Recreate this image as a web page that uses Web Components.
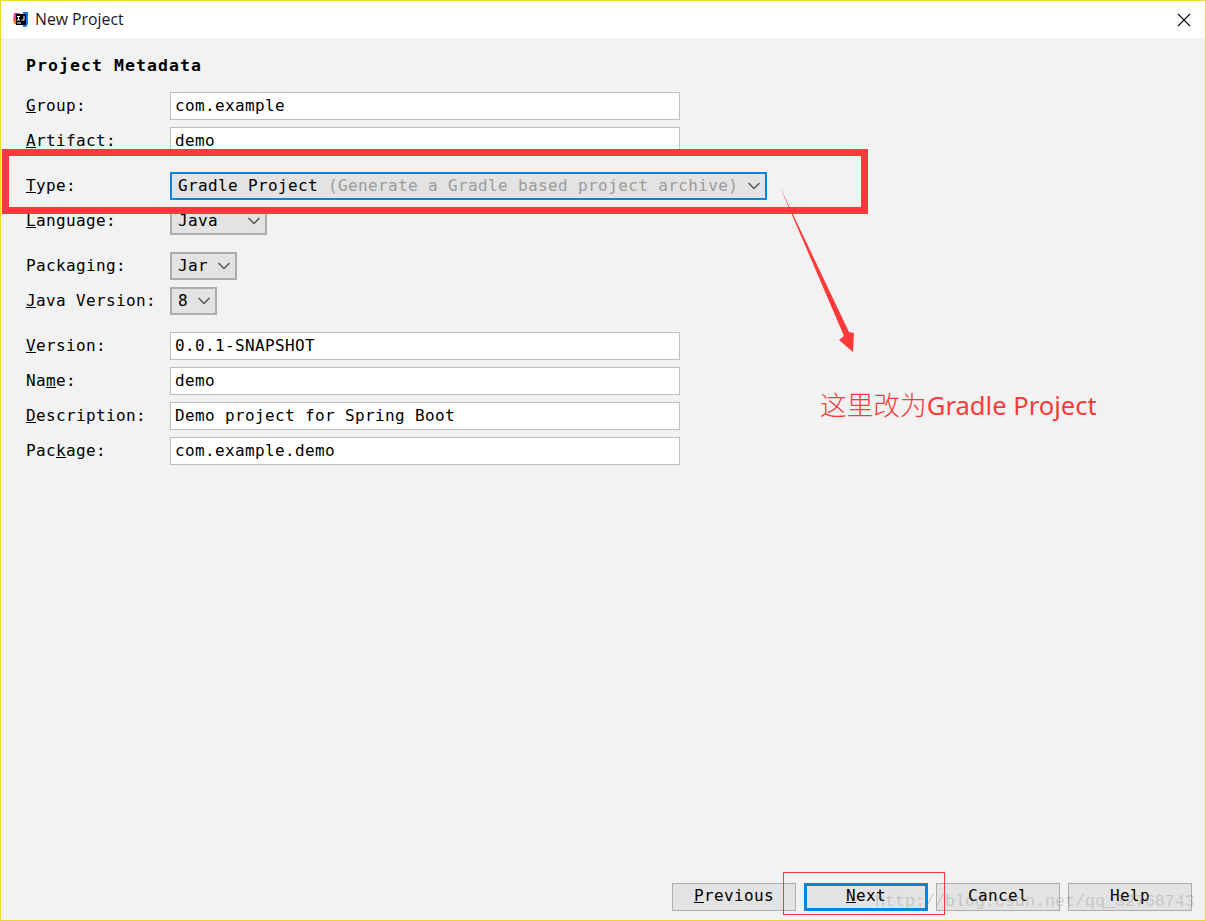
<!DOCTYPE html>
<html>
<head>
<meta charset="utf-8">
<title>New Project</title>
<style>
  html, body { margin: 0; padding: 0; background: #f2f2f2; }
</style>
</head>
<body>
<np-window>
  <np-titlebar slot="title">New Project</np-titlebar>

  <np-section>Project Metadata</np-section>

  <np-group>
    <np-field><u>G</u>roup:<np-input slot="control">com.example</np-input></np-field>
    <np-field><u>A</u>rtifact:<np-input slot="control">demo</np-input></np-field>
  </np-group>
  <np-group>
    <np-field><u>T</u>ype:<np-select slot="control" focused style="--label-width:560px">Gradle Project <span style="color:#9b9b9b">(Generate a Gradle based project archive)</span></np-select></np-field>
    <np-field><u>L</u>anguage:<np-select slot="control" style="--label-width:60px">Java</np-select></np-field>
  </np-group>
  <np-group>
    <np-field>Packa<u>g</u>ing:<np-select slot="control" style="--label-width:30px">Jar</np-select></np-field>
    <np-field><u>J</u>ava Version:<np-select slot="control" style="--label-width:10px">8</np-select></np-field>
  </np-group>
  <np-group>
    <np-field><u>V</u>ersion:<np-input slot="control">0.0.1-SNAPSHOT</np-input></np-field>
    <np-field>Na<u>m</u>e:<np-input slot="control">demo</np-input></np-field>
    <np-field><u>D</u>escription:<np-input slot="control">Demo project for Spring Boot</np-input></np-field>
    <np-field>Pac<u>k</u>age:<np-input slot="control">com.example.demo</np-input></np-field>
  </np-group>

  <np-button slot="footer"><u>P</u>revious</np-button>
  <np-button slot="footer" primary><u>N</u>ext</np-button>
  <np-button slot="footer">Cancel</np-button>
  <np-button slot="footer">Help</np-button>

  <np-annotations slot="overlay"></np-annotations>
</np-window>

<script>
const MONO = `"DejaVu Sans Mono", "Liberation Mono", monospace`;

class NpWindow extends HTMLElement {
  constructor() {
    super();
    this.attachShadow({ mode: 'open' }).innerHTML = `
      <style>
        :host {
          display: flex;
          flex-direction: column;
          position: relative;
          box-sizing: border-box;
          width: 1206px;
          height: 921px;
          overflow: hidden;
          border: 1px solid #ecd62e;
          background: #f2f2f2;
          color: #000;
          font-family: ${MONO};
          font-size: 16px;
          letter-spacing: 0.37px;
        }
        main { flex: 1; display: flex; flex-direction: column; padding: 15px 0 0 25px; }
        footer { display: flex; justify-content: flex-end; gap: 8px; padding: 0 13px 9px 0; }
      </style>
      <slot name="title"></slot>
      <main><slot></slot></main>
      <footer><slot name="footer"></slot></footer>
      <slot name="overlay"></slot>
    `;
  }
}

class NpTitlebar extends HTMLElement {
  constructor() {
    super();
    this.attachShadow({ mode: 'open' }).innerHTML = `
      <style>
        :host {
          display: flex;
          align-items: center;
          height: 37px;
          padding-left: 11px;
          background: #fff;
          font-family: "Open Sans", "Noto Sans", sans-serif;
          font-size: 15.800px;
          letter-spacing: 0;
          color: #1a1a1a;
        }
        .logo { width: 17px; height: 17px; margin-right: 6px; margin-top: -1px; }
        .title { flex: 1; padding-bottom: 1px; }
        .close { width: 14px; height: 14px; margin-right: 14px; }
      </style>
      <svg class="logo" viewBox="0 0 17 17">
        <path d="M2 2h6v8H1z" fill="#fc318c"/>
        <path d="M1 8h3v5H2z" fill="#f97a12"/>
        <path d="M11 1h5v12l-2 3h-3z" fill="#087cfa"/>
        <rect x="4" y="3" width="10" height="11" fill="#000"/>
        <rect x="5" y="5" width="3" height="1" fill="#fff"/>
        <rect x="6" y="5" width="1" height="4" fill="#fff"/>
        <rect x="5" y="8.500" width="3" height="1" fill="#fff"/>
        <path d="M11.500 5v3.500h-2v1h3v-4.500z" fill="#fff"/>
        <rect x="5" y="11.500" width="4" height="1" fill="#fff"/>
      </svg>
      <span class="title"><slot></slot></span>
      <svg class="close" viewBox="0 0 14 14"><path d="M1 1l12 12M13 1L1 13" stroke="#111" stroke-width="1.100" fill="none"/></svg>
    `;
  }
}

class NpSection extends HTMLElement {
  constructor() {
    super();
    this.attachShadow({ mode: 'open' }).innerHTML = `
      <style>
        :host {
          display: block;
          height: 39px;
          padding-top: 1px;
          margin-bottom: -1px;
          font-weight: 700;
          font-size: 16.500px;
          line-height: 24px;
          letter-spacing: 1.060px;
        }
      </style>
      <slot></slot>
    `;
  }
}

class NpGroup extends HTMLElement {
  constructor() {
    super();
    this.attachShadow({ mode: 'open' }).innerHTML = `
      <style>
        :host { display: flex; flex-direction: column; gap: 7px; margin-bottom: 17px; }
      </style>
      <slot></slot>
    `;
  }
}

class NpField extends HTMLElement {
  constructor() {
    super();
    this.attachShadow({ mode: 'open' }).innerHTML = `
      <style>
        :host { display: grid; grid-template-columns: 144px 1fr; align-items: center; height: 28px; }
        ::slotted(*) { justify-self: start; }
        .label { padding-bottom: 2px; }
      </style>
      <span class="label"><slot></slot></span>
      <slot name="control"></slot>
    `;
  }
}

class NpInput extends HTMLElement {
  constructor() {
    super();
    this.attachShadow({ mode: 'open' }).innerHTML = `
      <style>
        :host {
          display: flex;
          align-items: center;
          box-sizing: border-box;
          width: 510px;
          height: 28px;
          padding-left: 4px;
          background: #fff;
          border: 1px solid #bfbfbf;
          white-space: pre;
        }
        .value { display: block; padding-bottom: 1px; }
      </style>
      <span class="value"><slot></slot></span>
    `;
  }
}

class NpSelect extends HTMLElement {
  constructor() {
    super();
    this.attachShadow({ mode: 'open' }).innerHTML = `
      <style>
        :host {
          display: inline-flex;
          align-items: center;
          box-sizing: border-box;
          height: 28px;
          padding: 0 4px 0 6px;
          gap: 9px;
          background: #e3e3e3;
          border: 2px solid #adadad;
          white-space: pre;
        }
        :host([focused]) { border-color: #0a84da; }
        .label { width: var(--label-width, auto); padding-bottom: 2px; }
        svg { width: 14px; height: 8px; flex: none; }
      </style>
      <span class="label"><slot></slot></span>
      <svg viewBox="0 0 14 8"><path d="M1.500 1l5.500 5.500L12.500 1" stroke="#555" stroke-width="1.500" fill="none"/></svg>
    `;
  }
}

class NpButton extends HTMLElement {
  constructor() {
    super();
    this.attachShadow({ mode: 'open' }).innerHTML = `
      <style>
        :host {
          display: flex;
          align-items: center;
          justify-content: center;
          box-sizing: border-box;
          width: 124px;
          height: 28px;
          padding-bottom: 4px;
          background: #e3e3e3;
          border: 1px solid #adadad;
        }
        :host([primary]) { border: 3px solid #0a84da; }
      </style>
      <slot></slot>
    `;
  }
}

// red markup drawn on top of the screenshot, placed on the free canvas
class NpAnnotations extends HTMLElement {
  constructor() {
    super();
    this.attachShadow({ mode: 'open' }).innerHTML = `
      <style>
        :host { position: absolute; inset: -1px; pointer-events: none; display: block; }
        .box { position: absolute; box-sizing: border-box; border: 7px solid #fc3a3a; left: 2px; top: 149px; width: 866px; height: 65px; }
        .thin { position: absolute; box-sizing: border-box; border: 1px solid #f63c3c; left: 783px; top: 872px; width: 162px; height: 43px; }
        svg { position: absolute; left: 0; top: 0; width: 1206px; height: 921px; }
        .note {
          position: absolute; left: 820px; top: 385px;
          font-family: "Noto Sans", "Noto Sans CJK SC", sans-serif;
          font-size: 25.600px; font-weight: 400; line-height: 38px;
          letter-spacing: 0; color: #fc3a3a; white-space: nowrap;
        }
        .note span { font-family: "Noto Sans CJK SC", sans-serif; font-size: 26.700px; font-weight: 300; }
        .mark {
          position: absolute; left: 875px; top: 892px;
          font-family: "Liberation Mono", monospace;
          font-size: 16.670px; line-height: 20px; letter-spacing: 0;
          color: rgba(120, 120, 120, 0.28); white-space: nowrap;
        }
      </style>
      <div class="mark">http://blog.csdn.net/qq_32768743</div>
      <div class="box"></div>
      <div class="thin"></div>
      <svg viewBox="0 0 1206 921">
        <path d="M780 187L849 332L854 333L853 352L839 340L844 336Z" fill="#fc3a3a"/>
      </svg>
      <div class="note"><span>这里改为</span>Gradle Project</div>
    `;
  }
}

customElements.define('np-window', NpWindow);
customElements.define('np-titlebar', NpTitlebar);
customElements.define('np-section', NpSection);
customElements.define('np-group', NpGroup);
customElements.define('np-field', NpField);
customElements.define('np-input', NpInput);
customElements.define('np-select', NpSelect);
customElements.define('np-button', NpButton);
customElements.define('np-annotations', NpAnnotations);
</script>
</body>
</html>
